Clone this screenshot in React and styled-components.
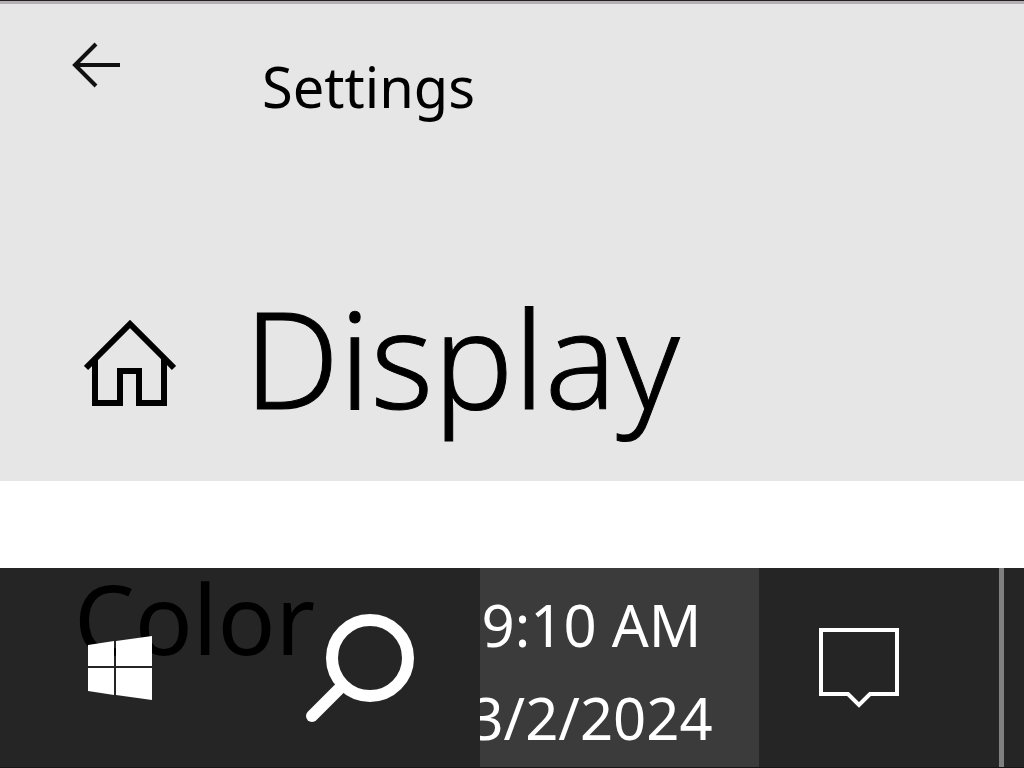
import React from 'react';
import styled, { createGlobalStyle } from 'styled-components';

const GlobalStyle = createGlobalStyle`
  * { box-sizing: border-box; }
  body {
    margin: 0;
    background: #ffffff;
    font-family: "Noto Sans", "Open Sans", sans-serif;
    color: #000000;
  }
`;

const Screen = styled.div`
  min-height: 100vh;
  display: flex;
  flex-direction: column;
`;

const Header = styled.header`
  background: #e6e6e6;
  border-top: 1px solid #231f20;
  box-shadow: inset 0 3px 0 #b4b0b3;
  padding-bottom: 20px;
`;

const TitleBar = styled.div`
  display: flex;
  align-items: flex-start;
  padding: 41px 24px 0 48px;
  min-height: 252px;
`;

const PageBar = styled.div`
  display: flex;
  align-items: center;
  padding: 0 24px 0 56px;
`;

const IconButton = styled.button`
  display: flex;
  align-items: center;
  justify-content: center;
  flex: none;
  width: ${(p) => p.$width}px;
  padding: 0;
  border: 0;
  background: transparent;
  color: inherit;
  svg { display: block; }
`;

const HomeButton = styled(IconButton)`
  padding-top: 14px;
`;

const AppName = styled.span`
  font-size: 56px;
  line-height: 88px;
  padding-left: 118px;
`;

const PageTitle = styled.h1`
  margin: 0;
  padding-left: 40px;
  font-size: 134px;
  line-height: 208px;
  font-weight: 300;
  -webkit-text-stroke: 1px currentColor;
`;

const Content = styled.main`
  position: relative;
  flex: 1;
  min-height: 87px;
`;

const SectionTitle = styled.h2`
  position: absolute;
  z-index: 1;
  top: 73px;
  left: 74px;
  margin: 0;
  font-size: 96px;
  line-height: 128px;
  font-weight: 400;
`;

const Taskbar = styled.footer`
  display: flex;
  height: 200px;
  background: #252525;
  border-bottom: 1px solid #161616;
  color: #ffffff;
`;

const TaskButton = styled.button`
  flex: ${(p) => (p.$width ? `0 0 ${p.$width}px` : '1 1 0')};
  display: flex;
  align-items: center;
  justify-content: center;
  padding: 0;
  border: 0;
  background: transparent;
  color: inherit;
  svg { display: block; position: relative; z-index: 2; }
`;

const Clock = styled.button`
  flex: 0 0 279px;
  display: flex;
  flex-direction: column;
  align-items: center;
  justify-content: center;
  overflow: hidden;
  padding: 6px 56px 0 0;
  border: 0;
  background: #3b3b3b;
  color: inherit;
  font-family: inherit;
  font-size: 58px;
  line-height: 93px;
  white-space: nowrap;
`;

const ShowDesktop = styled.button`
  flex: 0 0 25px;
  margin-left: 40px;
  padding: 0;
  border: 0;
  border-left: 5px solid #808080;
  background: transparent;
`;

const BackIcon = () => (
  <svg width="50" height="46" viewBox="0 0 50 46" fill="none" stroke="#111111" strokeWidth="4" aria-hidden="true">
    <path d="M25 2 L4 23 L25 44 M4 23 H49" />
  </svg>
);

const HomeIcon = () => (
  <svg width="92" height="88" viewBox="0 0 92 88" fill="none" stroke="currentColor" strokeWidth="6" aria-hidden="true">
    <path d="M2 48 L46 4 L90 48" />
    <path d="M11 39 V83 H36 V51 H55 V83 H80 V39" />
  </svg>
);

const WindowsIcon = () => (
  <svg width="64" height="64" viewBox="0 0 64 64" fill="currentColor" aria-hidden="true">
    <path d="M0 9 L26 5 V30 H0 Z M28 5 L64 0 V30 H28 Z M0 32 H26 V59 L0 55 Z M28 32 H64 V64 L28 59 Z" />
  </svg>
);

const SearchIcon = () => (
  <svg width="108" height="108" viewBox="0 0 108 108" fill="none" stroke="currentColor" strokeWidth="12" aria-hidden="true">
    <circle cx="64" cy="44" r="38" />
    <path d="M6 102 L36 72" strokeLinecap="round" />
  </svg>
);

const NotificationIcon = () => (
  <svg width="80" height="80" viewBox="0 0 80 80" fill="none" stroke="currentColor" strokeWidth="4" aria-hidden="true">
    <path d="M2 2 H78 V66 H51 L40 77 L29 66 H2 Z" />
  </svg>
);

export default function App() {
  return (
    <Screen>
      <GlobalStyle />
      <Header>
        <TitleBar>
          <IconButton $width={96} aria-label="Back"><BackIcon /></IconButton>
          <AppName>Settings</AppName>
        </TitleBar>
        <PageBar>
          <HomeButton $width={148} aria-label="Home"><HomeIcon /></HomeButton>
          <PageTitle>Display</PageTitle>
        </PageBar>
      </Header>
      <Content>
        <SectionTitle>Color</SectionTitle>
      </Content>
      <Taskbar>
        <TaskButton aria-label="Start"><WindowsIcon /></TaskButton>
        <TaskButton aria-label="Search"><SearchIcon /></TaskButton>
        <Clock>
          <span>9:10 AM</span>
          <span>3/2/2024</span>
        </Clock>
        <TaskButton $width={200} aria-label="Notifications"><NotificationIcon /></TaskButton>
        <ShowDesktop aria-label="Show desktop" />
      </Taskbar>
    </Screen>
  );
}
